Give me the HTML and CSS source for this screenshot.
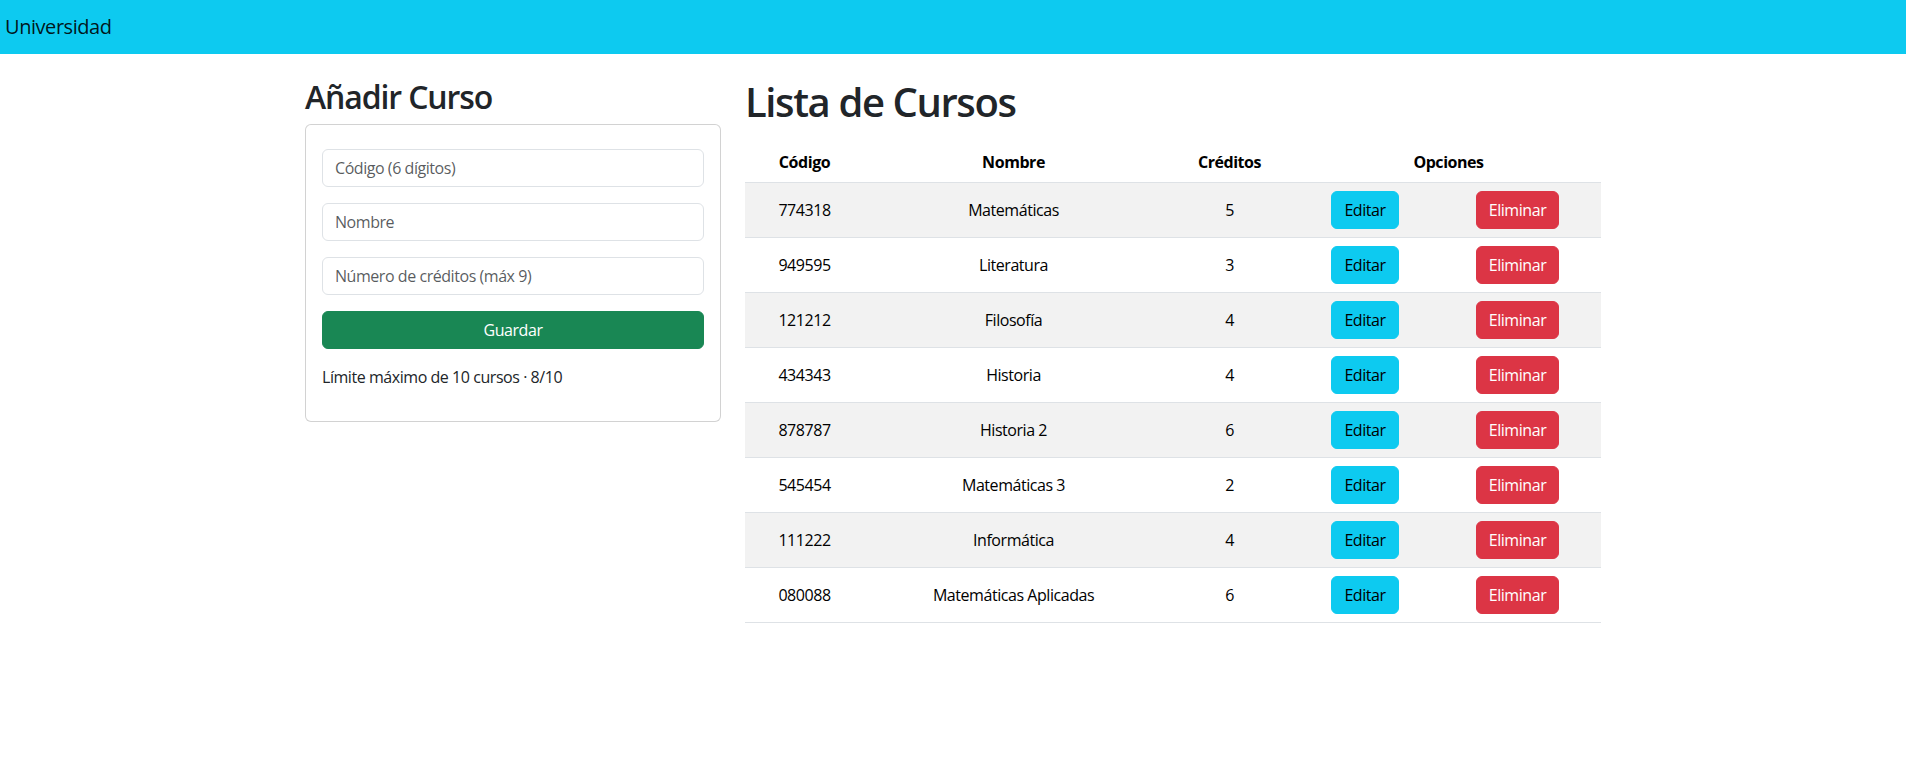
FILE: index.html
```html
<!DOCTYPE html>
<html lang="es">
<head>
<meta charset="utf-8">
<title>Universidad</title>
<link rel="stylesheet" href="styles.css">
</head>
<body>
<nav class="navbar"><span class="brand">Universidad</span></nav>
<main class="container">
  <section class="col-form">
    <h2 class="title-sm">Añadir Curso</h2>
    <div class="card">
      <form class="card-body">
        <input class="field" type="text" placeholder="Código (6 dígitos)">
        <input class="field" type="text" placeholder="Nombre">
        <input class="field" type="text" placeholder="Número de créditos (máx 9)">
        <button class="btn btn-success" type="button">Guardar</button>
        <p class="limit">Límite máximo de 10 cursos · 8/10</p>
      </form>
    </div>
  </section>
  <section class="col-list">
    <h1 class="title-lg">Lista de Cursos</h1>
    <table class="courses">
      <colgroup>
        <col class="c-code"><col class="c-name"><col class="c-cred"><col class="c-edit"><col class="c-del">
      </colgroup>
      <thead>
        <tr><th>Código</th><th>Nombre</th><th>Créditos</th><th colspan="2">Opciones</th></tr>
      </thead>
      <tbody>
        <tr><td>774318</td><td>Matemáticas</td><td>5</td><td><button class="btn btn-info">Editar</button></td><td><button class="btn btn-danger">Eliminar</button></td></tr>
        <tr><td>949595</td><td>Literatura</td><td>3</td><td><button class="btn btn-info">Editar</button></td><td><button class="btn btn-danger">Eliminar</button></td></tr>
        <tr><td>121212</td><td>Filosofía</td><td>4</td><td><button class="btn btn-info">Editar</button></td><td><button class="btn btn-danger">Eliminar</button></td></tr>
        <tr><td>434343</td><td>Historia</td><td>4</td><td><button class="btn btn-info">Editar</button></td><td><button class="btn btn-danger">Eliminar</button></td></tr>
        <tr><td>878787</td><td>Historia 2</td><td>6</td><td><button class="btn btn-info">Editar</button></td><td><button class="btn btn-danger">Eliminar</button></td></tr>
        <tr><td>545454</td><td>Matemáticas 3</td><td>2</td><td><button class="btn btn-info">Editar</button></td><td><button class="btn btn-danger">Eliminar</button></td></tr>
        <tr><td>111222</td><td>Informática</td><td>4</td><td><button class="btn btn-info">Editar</button></td><td><button class="btn btn-danger">Eliminar</button></td></tr>
        <tr><td>080088</td><td>Matemáticas Aplicadas</td><td>6</td><td><button class="btn btn-info">Editar</button></td><td><button class="btn btn-danger">Eliminar</button></td></tr>
      </tbody>
    </table>
  </section>
</main>
</body>
</html>
```
FILE: styles.css
```css
* { box-sizing: border-box; }

html, body {
  margin: 0;
  padding: 0;
}

body {
  font-family: "Open Sans", "Noto Sans", "Liberation Sans", sans-serif;
  font-size: 16px;
  line-height: 1.5;
  letter-spacing: -0.028em;
  color: #212529;
  background: #fff;
}

.navbar {
  height: 54px;
  background: #0dcaf0;
  display: flex;
  align-items: center;
  padding: 0 5px;
}

.brand {
  font-size: 20px;
  line-height: 30px;
  color: rgba(0, 0, 0, 0.9);
}

.container {
  width: 1320px;
  margin: 24px auto 0;
  padding: 0 12px;
  display: flex;
  gap: 24px;
  align-items: flex-start;
}

.col-form {
  width: 416px;
  flex: none;
}

.col-list {
  flex: 1;
  min-width: 0;
}

.title-sm {
  font-size: 32px;
  font-weight: 600;
  line-height: 1.2;
  letter-spacing: -0.035em;
  margin: 0 0 8px;
}

.title-lg {
  font-size: 40px;
  font-weight: 600;
  line-height: 1.2;
  letter-spacing: -0.035em;
  margin: 0 0 16px;
}

.card {
  border: 1px solid rgba(0, 0, 0, 0.175);
  border-radius: 6px;
  background: #fff;
}

.card-body {
  padding: 24px 16px 16px;
  margin: 0;
  display: flex;
  flex-direction: column;
}

.field {
  display: block;
  width: 100%;
  height: 38px;
  padding: 6px 12px;
  margin: 0 0 16px;
  font: inherit;
  font-size: 16px;
  line-height: 24px;
  letter-spacing: inherit;
  color: #212529;
  background: #fff;
  border: 1px solid #dee2e6;
  border-radius: 6px;
  outline: none;
}

.field::placeholder {
  color: rgba(33, 37, 41, 0.75);
}

.btn {
  display: inline-block;
  font-family: inherit;
  font-size: 16px;
  line-height: 24px;
  letter-spacing: inherit;
  padding: 6px 12px;
  border: 1px solid transparent;
  border-radius: 6px;
  cursor: pointer;
  text-align: center;
  white-space: nowrap;
}

.btn-success {
  width: 100%;
  background: #198754;
  border-color: #198754;
  color: #fff;
  margin-bottom: 16px;
}

.btn-info {
  background: #0dcaf0;
  border-color: #0dcaf0;
  color: #000;
}

.btn-danger {
  background: #dc3545;
  border-color: #dc3545;
  color: #fff;
}

.limit {
  margin: 0 0 16px;
}

.courses {
  width: 100%;
  table-layout: fixed;
  border-collapse: collapse;
  color: #000;
}

.c-code { width: 119px; }
.c-name { width: 299px; }
.c-cred { width: 133px; }
.c-edit { width: 138px; }
.c-del { width: 167px; }

.courses th,
.courses td {
  padding: 8px;
  text-align: center;
  vertical-align: middle;
  border-bottom: 1px solid #dee2e6;
}

.courses th {
  font-weight: 700;
}

.courses tbody tr:nth-child(odd) td {
  background: #f2f2f2;
}
```
